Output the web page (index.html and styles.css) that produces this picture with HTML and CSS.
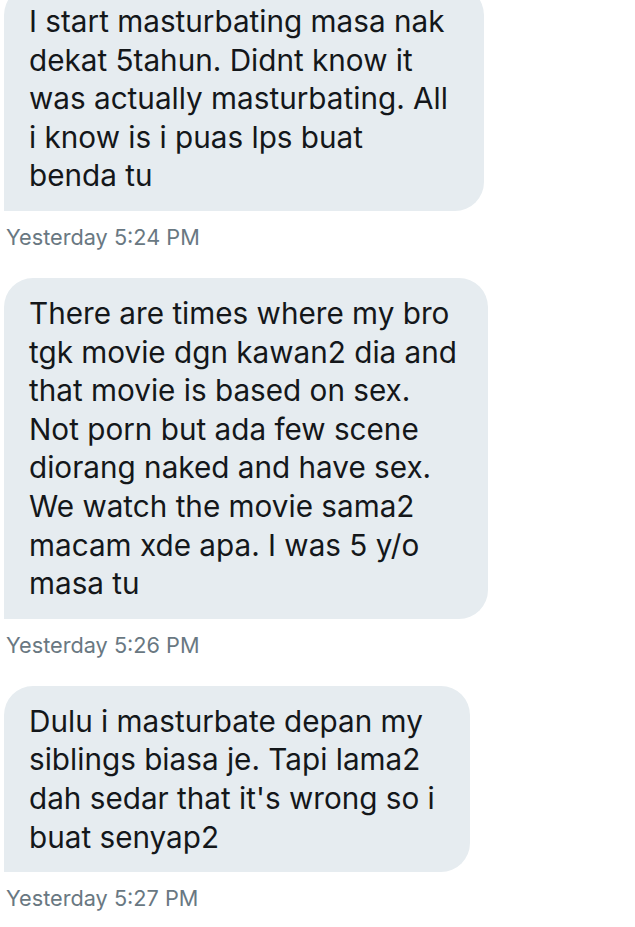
FILE: index.html
```html
<!DOCTYPE html>
<html>
<head>
<meta charset="utf-8">
<link rel="stylesheet" href="styles.css">
</head>
<body>
<div class="thread">
  <div class="msg">
    <div class="bubble b1">I start masturbating masa nak<br>dekat 5tahun. Didnt know it<br>was actually masturbating. All<br>i know is i puas lps buat<br>benda tu</div>
    <div class="time">Yesterday 5:24 PM</div>
  </div>
  <div class="msg">
    <div class="bubble b2">There are times where my bro<br>tgk movie dgn kawan2 dia and<br>that movie is based on sex.<br>Not porn but ada few scene<br>diorang naked and have sex.<br>We watch the movie sama2<br>macam xde apa. I was 5 y/o<br>masa tu</div>
    <div class="time">Yesterday 5:26 PM</div>
  </div>
  <div class="msg">
    <div class="bubble b3">Dulu i masturbate depan my<br>siblings biasa je. Tapi lama2<br>dah sedar that it's wrong so i<br>buat senyap2</div>
    <div class="time">Yesterday 5:27 PM</div>
  </div>
</div>
</body>
</html>
```
FILE: styles.css
```css
html, body {
  margin: 0;
  padding: 0;
  background: #ffffff;
}
body {
  width: 635px;
  height: 927px;
  overflow: hidden;
  font-family: "Inter", "Roboto", "Liberation Sans", sans-serif;
}
.thread {
  display: flex;
  flex-direction: column;
  gap: 28px;
  margin-top: -14px;
  padding-left: 4px;
}
.msg {
  display: flex;
  flex-direction: column;
  align-items: flex-start;
}
.bubble {
  background: #e6ecf0;
  color: #14171a;
  font-size: 29.7px;
  line-height: 38.6px;
  padding: 16px 0 16px 25px;
  border-radius: 29px 29px 29px 0;
  box-sizing: border-box;
  white-space: nowrap;
}
.b1 { width: 480px; }
.b2 { width: 484px; }
.b3 { width: 466px; }
.time {
  margin-top: 13px;
  margin-left: 2px;
  font-size: 21.7px;
  line-height: 26px;
  color: #697882;
}
```
